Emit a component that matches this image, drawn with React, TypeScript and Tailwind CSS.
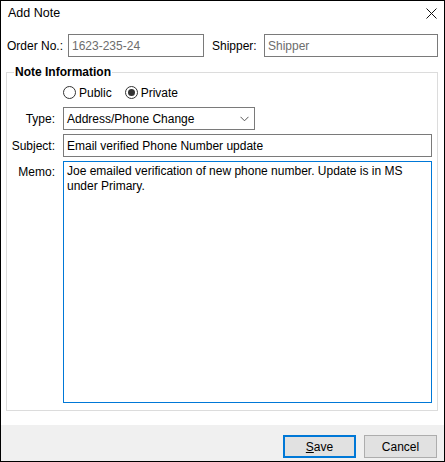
import React from 'react'

const font = { fontFamily: '"Liberation Sans", Arial, sans-serif' }

function Radio({ label, checked }: { label: string; checked?: boolean }) {
  return (
    <div className="flex items-center gap-[3px]">
      <span className="w-[13px] h-[13px] rounded-full border border-[#333] bg-white flex items-center justify-center">
        {checked && <span className="w-[7px] h-[7px] rounded-full bg-[#333]" />}
      </span>
      <span>{label}</span>
    </div>
  )
}

export default function App() {
  return (
    <div
      className="w-[445px] h-[462px] border border-black bg-white flex flex-col text-[12px] leading-[14px] text-black"
      style={font}
    >
      {/* title bar */}
      <div className="h-[23px] flex items-center justify-between pl-[7px] pr-[7px]">
        <span className="text-[12.5px]">Add Note</span>
        <svg width="11" height="11" viewBox="0 0 11 11" className="mt-[1px]">
          <path d="M0.5 0.5 L10.5 10.5 M10.5 0.5 L0.5 10.5" stroke="#111" strokeWidth="1" />
        </svg>
      </div>

      <div className="pl-[5px] pr-[6px]">
        {/* order row */}
        <div className="flex items-center mt-[10px] h-[23px]">
          <span className="ml-[1px] w-[61px]">Order No.:</span>
          <div className="w-[136px] h-[23px] border border-[#7a7a7a] flex items-center px-[3px] text-[#6d6d6d]">
            1623-235-24
          </div>
          <span className="ml-[8px] w-[52px]">Shipper:</span>
          <div className="w-[174px] h-[23px] border border-[#7a7a7a] flex items-center px-[3px] text-[#6d6d6d]">
            Shipper
          </div>
        </div>

        {/* group box */}
        <div className="relative mt-[15px] h-[339px] border border-[#dcdcdc] pl-[56px] pr-[5px] pt-[13px] pb-[7px] flex flex-col">
          <span className="absolute left-[7px] -top-[8px] bg-white px-[1px] font-bold">Note Information</span>

          <div className="flex items-center gap-[13px] h-[13px]">
            <Radio label="Public" />
            <Radio label="Private" checked />
          </div>

          <div className="flex items-center mt-[8px] h-[23px]">
            <span className="w-[48px] -ml-[56px] mr-[8px] text-right">Type:</span>
            <div className="w-[192px] h-[23px] border border-[#7a7a7a] flex items-center justify-between pl-[3px] pr-[5px]">
              <span>Address/Phone Change</span>
              <svg width="9" height="6" viewBox="0 0 9 6">
                <path d="M0.5 0.8 L4.5 4.8 L8.5 0.8" fill="none" stroke="#555" strokeWidth="1" />
              </svg>
            </div>
          </div>

          <div className="flex items-center mt-[4px] h-[23px]">
            <span className="w-[48px] -ml-[56px] mr-[8px] text-right">Subject:</span>
            <div className="flex-1 h-[23px] border border-[#7a7a7a] flex items-center px-[3px]">
              Email verified Phone Number update
            </div>
          </div>

          <div className="flex mt-[4px] flex-1">
            <span className="w-[48px] -ml-[56px] mr-[8px] text-right pt-[4px]">Memo:</span>
            <div className="flex-1 border border-[#0078d7] px-[3px] pt-[2px] leading-[15px]">
              Joe emailed verification of new phone number. Update is in MS under Primary.
            </div>
          </div>
        </div>
      </div>

      {/* bottom bar */}
      <div className="mt-[14px] flex-1 bg-[#f0f0f0] flex justify-end items-start gap-[8px] pt-[10px] pr-[7px]">
        <button className="w-[73px] h-[23px] bg-[#e1e1e1] border-2 border-[#0078d7] flex items-center justify-center">
          <span>
            <span className="underline">S</span>ave
          </span>
        </button>
        <button className="w-[73px] h-[23px] bg-[#e1e1e1] border border-[#adadad] flex items-center justify-center">
          Cancel
        </button>
      </div>
    </div>
  )
}
